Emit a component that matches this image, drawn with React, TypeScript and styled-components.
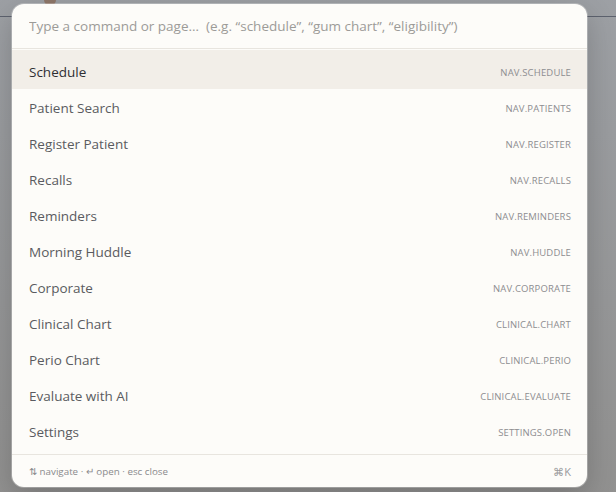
import styled, { createGlobalStyle } from "styled-components";

interface ICommand {
    label: string;
    action: string;
}

const commands: ICommand[] = [
    { label: "Schedule", action: "NAV.SCHEDULE" },
    { label: "Patient Search", action: "NAV.PATIENTS" },
    { label: "Register Patient", action: "NAV.REGISTER" },
    { label: "Recalls", action: "NAV.RECALLS" },
    { label: "Reminders", action: "NAV.REMINDERS" },
    { label: "Morning Huddle", action: "NAV.HUDDLE" },
    { label: "Corporate", action: "NAV.CORPORATE" },
    { label: "Clinical Chart", action: "CLINICAL.CHART" },
    { label: "Perio Chart", action: "CLINICAL.PERIO" },
    { label: "Evaluate with AI", action: "CLINICAL.EVALUATE" },
    { label: "Settings", action: "SETTINGS.OPEN" },
];

const GlobalStyle = createGlobalStyle`
    html, body {
        margin: 0;
        padding: 0;
        width: 616px;
        height: 492px;
        overflow: hidden;
    }
    body {
        font-family: "Open Sans", "Noto Sans", sans-serif;
    }
`;

const Page = styled.div`
    position: relative;
    width: 616px;
    height: 492px;
    background: #f4f2ee;
`;

const PageHeader = styled.div`
    height: 16px;
    border-bottom: 1px solid #1c2238;
    display: flex;
    align-items: flex-end;
    padding-left: 44px;
`;

const HeaderDot = styled.span`
    width: 12px;
    height: 12px;
    border-radius: 50%;
    background: #c46a2a;
    margin-bottom: 10px;
`;

const Backdrop = styled.div`
    position: absolute;
    inset: 0;
    background: linear-gradient(180deg, rgba(120, 125, 133, 0.7) 0%, rgba(118, 118, 118, 0.78) 100%);
    padding: 4px 0 0 12px;
`;

const Palette = styled.div`
    width: 575px;
    height: 483px;
    background: #fdfcf9;
    border-radius: 12px;
    box-shadow: 0 0 0 1px rgba(255, 255, 255, 0.25), 0 10px 30px rgba(0, 0, 0, 0.2);
    display: flex;
    flex-direction: column;
    overflow: hidden;
`;

const SearchInput = styled.input`
    height: 44px;
    flex-shrink: 0;
    border: none;
    border-bottom: 1px solid #e8e5df;
    background: transparent;
    padding: 0 16px 0 17px;
    font-family: "Open Sans", "Noto Sans", sans-serif;
    font-size: 13.5px;
    color: #333;
    outline: none;
    &::placeholder {
        color: #9c9b98;
    }
`;

const List = styled.div`
    flex: 1;
    padding-top: 1px;
    border-bottom: 1px solid #e8e5df;
`;

const Row = styled.div<{ active?: boolean }>`
    height: 36px;
    display: flex;
    align-items: center;
    justify-content: space-between;
    padding: 2px 16px 0 17px;
    box-sizing: border-box;
    background: ${props => props.active ? "#f2eee8" : "transparent"};
    &:first-child {
        height: 39px;
        padding-top: 5px;
    }
`;

const Label = styled.span<{ active?: boolean }>`
    font-size: 13.5px;
    color: ${props => props.active ? "#2f2f33" : "#5a5b60"};
`;

const Action = styled.span`
    font-size: 9.5px;
    color: #8d8d90;
    letter-spacing: 0.15px;
`;

const Footer = styled.div`
    height: 32px;
    flex-shrink: 0;
    display: flex;
    align-items: center;
    justify-content: space-between;
    padding: 0 16px 0 17px;
    font-size: 9.8px;
    color: #8a8a8c;
`;

const Shortcut = styled.span`
    font-size: 11px;
    color: #9a9a9c;
`;

function App() {
    return <Page>
        <GlobalStyle />
        <PageHeader><HeaderDot /></PageHeader>
        <Backdrop>
            <Palette>
                <SearchInput placeholder="Type a command or page…  (e.g. “schedule”, “gum chart”, “eligibility”)" />
                <List>
                    {commands.map((c, i) => (
                        <Row key={c.action} active={i === 0}>
                            <Label active={i === 0}>{c.label}</Label>
                            <Action>{c.action}</Action>
                        </Row>
                    ))}
                </List>
                <Footer>
                    <span>⇅ navigate · ↵ open · esc close</span>
                    <Shortcut>⌘K</Shortcut>
                </Footer>
            </Palette>
        </Backdrop>
    </Page>
}

export default App;
